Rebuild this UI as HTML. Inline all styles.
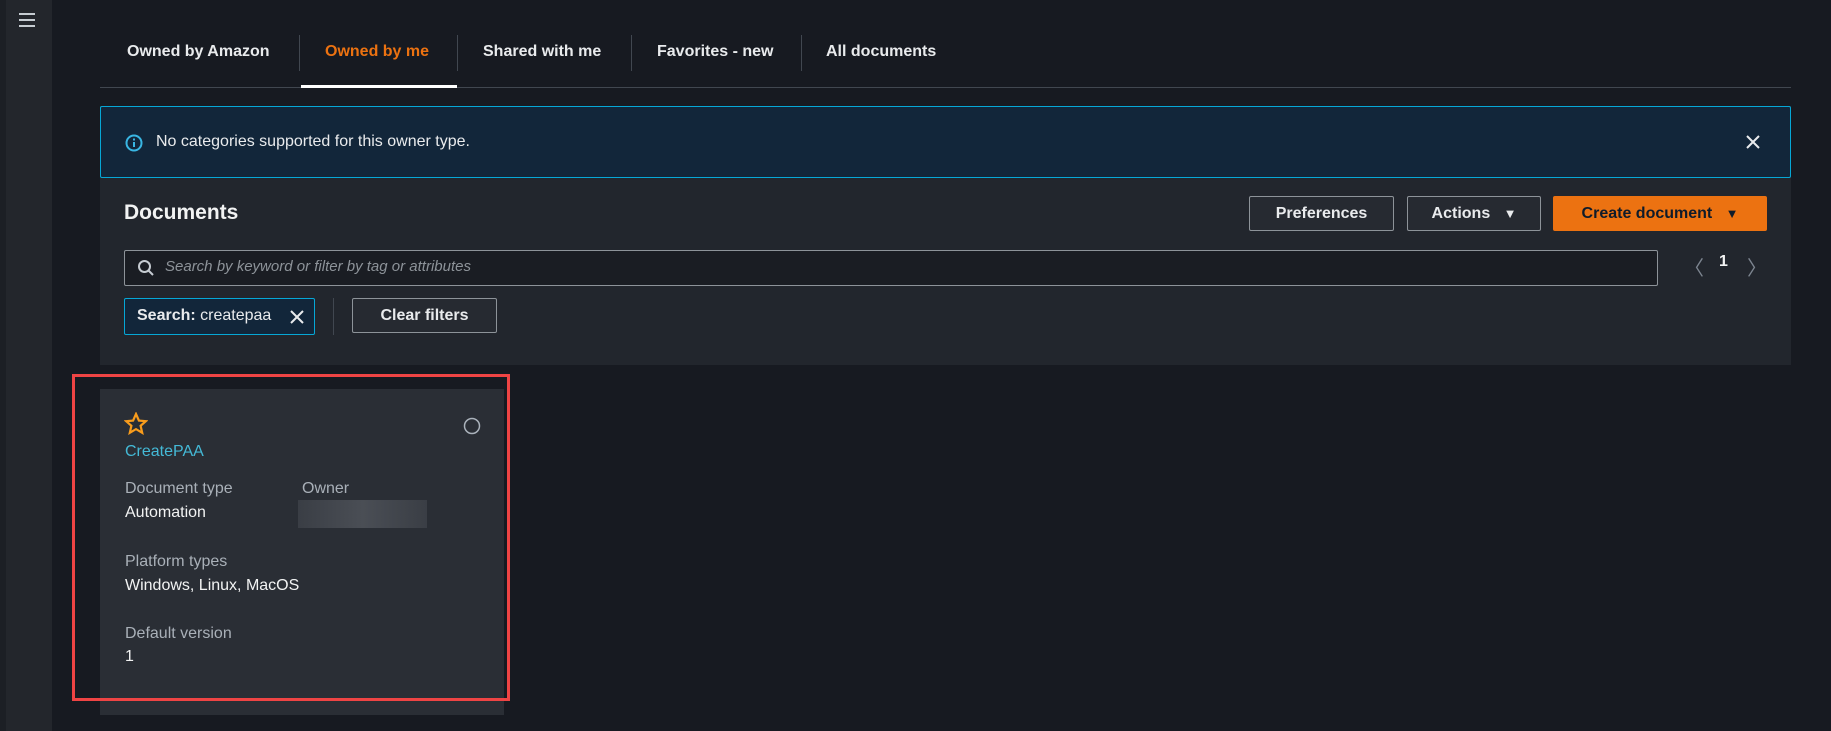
<!DOCTYPE html>
<html><head><meta charset="utf-8"><style>
*{box-sizing:border-box;margin:0;padding:0}
body{width:1831px;height:731px;background:#171a21;font-family:"Liberation Sans",sans-serif;position:relative;overflow:hidden;color:#d5dbdb}
.a{position:absolute}
.side{left:0;top:0;width:52px;height:731px;background:#23262c;border-left:6px solid #1c1f25}
.tab{top:43px;font-size:16px;font-weight:bold;color:#e9ebed;white-space:nowrap}
.sep{top:35px;width:1px;height:36px;background:#414750}
.btn{border:1px solid #8d9399;border-radius:2px;background:#262a31;color:#e9ebed;font-weight:bold;font-size:16px;display:flex;align-items:center;justify-content:center}
.lbl{font-size:16px;color:#a9b0b8}
.val{font-size:16px;color:#f2f3f3}
</style></head><body>
<div class="a side"></div>
<div class="a" style="left:19px;top:13px;width:16px;height:2px;background:#c6ccd2;box-shadow:0 6px 0 #c6ccd2,0 12px 0 #c6ccd2"></div>

<div class="a tab" style="left:127px">Owned by Amazon</div>
<div class="a sep" style="left:299px"></div>
<div class="a tab" style="left:325px;color:#ec7211">Owned by me</div>
<div class="a sep" style="left:457px"></div>
<div class="a tab" style="left:483px">Shared with me</div>
<div class="a sep" style="left:631px"></div>
<div class="a tab" style="left:657px">Favorites - new</div>
<div class="a sep" style="left:801px"></div>
<div class="a tab" style="left:826px">All documents</div>
<div class="a" style="left:100px;top:87px;width:1691px;height:1px;background:#414750"></div>
<div class="a" style="left:301px;top:85px;width:156px;height:3px;background:#fff"></div>

<div class="a" style="left:100px;top:106px;width:1691px;height:259px;background:#22262d"></div>
<div class="a" style="left:100px;top:106px;width:1691px;height:72px;background:#12263a;border:1px solid #06a7d6;border-radius:2px"></div>
<svg class="a" style="left:125px;top:134px" width="18" height="18" viewBox="0 0 18 18"><circle cx="9" cy="9" r="7.5" fill="none" stroke="#39b6e3" stroke-width="2"/><rect x="8" y="8" width="2" height="5" fill="#39b6e3"/><rect x="8" y="4.5" width="2" height="2" fill="#39b6e3"/></svg>
<div class="a" style="left:156px;top:133px;font-size:16px;color:#e9ebed">No categories supported for this owner type.</div>
<svg class="a" style="left:1745px;top:134px" width="16" height="16" viewBox="0 0 16 16"><path d="M2 2L14 14M14 2L2 14" stroke="#e9ebed" stroke-width="2"/></svg>

<div class="a" style="left:124px;top:201px;font-size:21px;font-weight:bold;color:#f2f3f3">Documents</div>
<div class="a btn" style="left:1249px;top:196px;width:145px;height:35px">Preferences</div>
<div class="a btn" style="left:1407px;top:196px;width:134px;height:35px">Actions&nbsp;&nbsp;&nbsp;<span style="font-size:13px">▼</span></div>
<div class="a btn" style="left:1553px;top:196px;width:214px;height:35px;background:#ec7211;border-color:#ec7211;color:#0f1b2a">Create document&nbsp;&nbsp;&nbsp;<span style="font-size:13px">▼</span></div>

<div class="a" style="left:124px;top:250px;width:1534px;height:36px;border:1px solid #8d9399;border-radius:2px;background:#1a1d23"></div>
<svg class="a" style="left:137px;top:259px" width="18" height="18" viewBox="0 0 18 18"><circle cx="7.5" cy="7.5" r="5.5" fill="none" stroke="#c6ccd2" stroke-width="2"/><path d="M11.5 11.5L16 16" stroke="#c6ccd2" stroke-width="2"/></svg>
<div class="a" style="left:165px;top:258px;font-size:15px;font-style:italic;color:#8d9399">Search by keyword or filter by tag or attributes</div>
<div class="a" style="left:1684px;top:252px;font-size:20px;color:#7d8590">〈</div>
<div class="a" style="left:1719px;top:253px;font-size:16px;font-weight:bold;color:#f2f3f3">1</div>
<div class="a" style="left:1747px;top:252px;font-size:20px;color:#7d8590">〉</div>

<div class="a" style="left:124px;top:298px;width:191px;height:37px;border:1px solid #06a7d6;background:#12263a;border-radius:2px"></div>
<div class="a" style="left:137px;top:307px;font-size:16px;color:#e9ebed"><b>Search:</b> createpaa</div>
<svg class="a" style="left:289px;top:309px" width="16" height="16" viewBox="0 0 16 16"><path d="M2 2L14 14M14 2L2 14" stroke="#e9ebed" stroke-width="2"/></svg>
<div class="a" style="left:333px;top:298px;width:1px;height:37px;background:#414750"></div>
<div class="a btn" style="left:352px;top:298px;width:145px;height:35px">Clear filters</div>

<div class="a" style="left:100px;top:389px;width:404px;height:326px;background:#2a2e35"></div>
<div class="a" style="left:72px;top:374px;width:438px;height:327px;border:3px solid #ef4444"></div>
<svg class="a" style="left:124px;top:412px" width="24" height="23" viewBox="0 0 24 23"><path d="M12 2L14.9 8.6L21.8 9.2L16.6 13.8L18.2 20.8L12 17.1L5.8 20.8L7.4 13.8L2.2 9.2L9.1 8.6Z" fill="none" stroke="#f89c1c" stroke-width="2.2" stroke-linejoin="miter"/></svg>
<svg class="a" style="left:463px;top:417px" width="18" height="18"><circle cx="9" cy="9" r="7.5" fill="none" stroke="#aab2bb" stroke-width="1.5"/></svg>
<div class="a" style="left:125px;top:443px;font-size:16px;color:#44b9d6">CreatePAA</div>
<div class="a lbl" style="left:125px;top:480px">Document type</div>
<div class="a val" style="left:125px;top:504px">Automation</div>
<div class="a lbl" style="left:302px;top:480px">Owner</div>
<div class="a" style="left:298px;top:500px;width:129px;height:28px;background:linear-gradient(90deg,#3a3e45,#4a4e55 50%,#3a3e45)"></div>
<div class="a lbl" style="left:125px;top:553px">Platform types</div>
<div class="a val" style="left:125px;top:577px">Windows, Linux, MacOS</div>
<div class="a lbl" style="left:125px;top:625px">Default version</div>
<div class="a val" style="left:125px;top:648px">1</div>
</body></html>
